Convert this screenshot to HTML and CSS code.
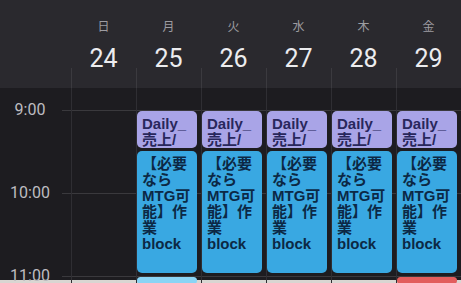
FILE: index.html
```html
<!DOCTYPE html>
<html lang="ja">
<head>
    <meta charset="UTF-8">
    <meta name="viewport" content="width=device-width, initial-scale=1.0">
    <title>Week</title>
    <link rel="stylesheet" href="styles.css">
</head>
<body>
    <div class="week-head">
        <div class="gutter"></div>
        <div class="day"><span class="dow">日</span><span class="date">24</span></div>
        <div class="day"><span class="dow">月</span><span class="date">25</span></div>
        <div class="day"><span class="dow">火</span><span class="date">26</span></div>
        <div class="day"><span class="dow">水</span><span class="date">27</span></div>
        <div class="day"><span class="dow">木</span><span class="date">28</span></div>
        <div class="day"><span class="dow">金</span><span class="date">29</span></div>
    </div>
    <div class="week-body">
        <div class="times">
            <div class="hour">9:00</div>
            <div class="hour">10:00</div>
            <div class="hour last">11:00</div>
        </div>
        <div class="col"></div>
        <div class="col">
            <div class="event daily">Daily_売上/</div>
            <div class="event work">【必要ならMTG可能】作業 block</div>
            <div class="event next soon"></div>
        </div>
        <div class="col">
            <div class="event daily">Daily_売上/</div>
            <div class="event work">【必要ならMTG可能】作業 block</div>
        </div>
        <div class="col">
            <div class="event daily">Daily_売上/</div>
            <div class="event work">【必要ならMTG可能】作業 block</div>
        </div>
        <div class="col">
            <div class="event daily">Daily_売上/</div>
            <div class="event work">【必要ならMTG可能】作業 block</div>
        </div>
        <div class="col">
            <div class="event daily">Daily_売上/</div>
            <div class="event work">【必要ならMTG可能】作業 block</div>
            <div class="event next alert"></div>
        </div>
    </div>
</body>
</html>
```
FILE: styles.css
```css
body {
    margin: 0;
    height: 283px;
    overflow: hidden;
    background: #1d1c20;
    font-family: Roboto, "Noto Sans CJK JP", sans-serif;
}
.week-head {
    display: grid;
    grid-template-columns: 71px repeat(6, 65px);
    height: 88px;
    background: #2a292e;
}
.day {
    display: flex;
    flex-direction: column;
    align-items: center;
    padding-top: 18px;
    /* short divider under each date */
    background: linear-gradient(#3b3a3f, #3b3a3f) left bottom / 1px 20px no-repeat;
}
.dow {
    font: 12px/16px "Noto Sans CJK JP", sans-serif;
    color: #9d9ca1;
}
.date {
    margin-top: 10px;
    font: 25px/30px Roboto, sans-serif;
    color: #ececee;
}
.week-body {
    display: grid;
    grid-template-columns: 71px repeat(6, 65px);
    height: 195px;
    overflow: hidden;
    background-image:
        linear-gradient(to top, #d9d6d2 3px, transparent 3px),
        linear-gradient(to bottom, #3a393d 1px, transparent 1px);
    background-size: 100% 100%, 100% 83px;
    background-position: 0 0, 62px 22px;
    background-repeat: no-repeat, repeat-y;
}
.times {
    padding: 14px 11px 0 0;
}
.hour {
    height: 83px;
    line-height: 16px;
    font-size: 16px;
    color: #bdbcc0;
    text-align: center;
}
.hour.last {
    height: auto;
}
.col {
    display: flex;
    flex-direction: column;
    border-left: 1px solid #2f2e33;
    padding-top: 23px;
}
.event {
    box-sizing: border-box;
    margin-right: 4px;
    padding: 5px 3px 0 5px;
    border-radius: 5px;
    overflow: hidden;
    font: bold 15px/16px "Liberation Sans", "Noto Sans CJK JP", sans-serif;
}
.daily {
    height: 37px;
    background: #a9a4e7;
    color: #28275c;
}
.work {
    height: 122px;
    margin-top: 3px;
    background: #39a8e2;
    color: #0c2845;
}
.next {
    flex: 1;
    margin-top: 4px;
}
.soon {
    background: #8ad4f5;
}
.alert {
    background: #e25d5d;
}
```
